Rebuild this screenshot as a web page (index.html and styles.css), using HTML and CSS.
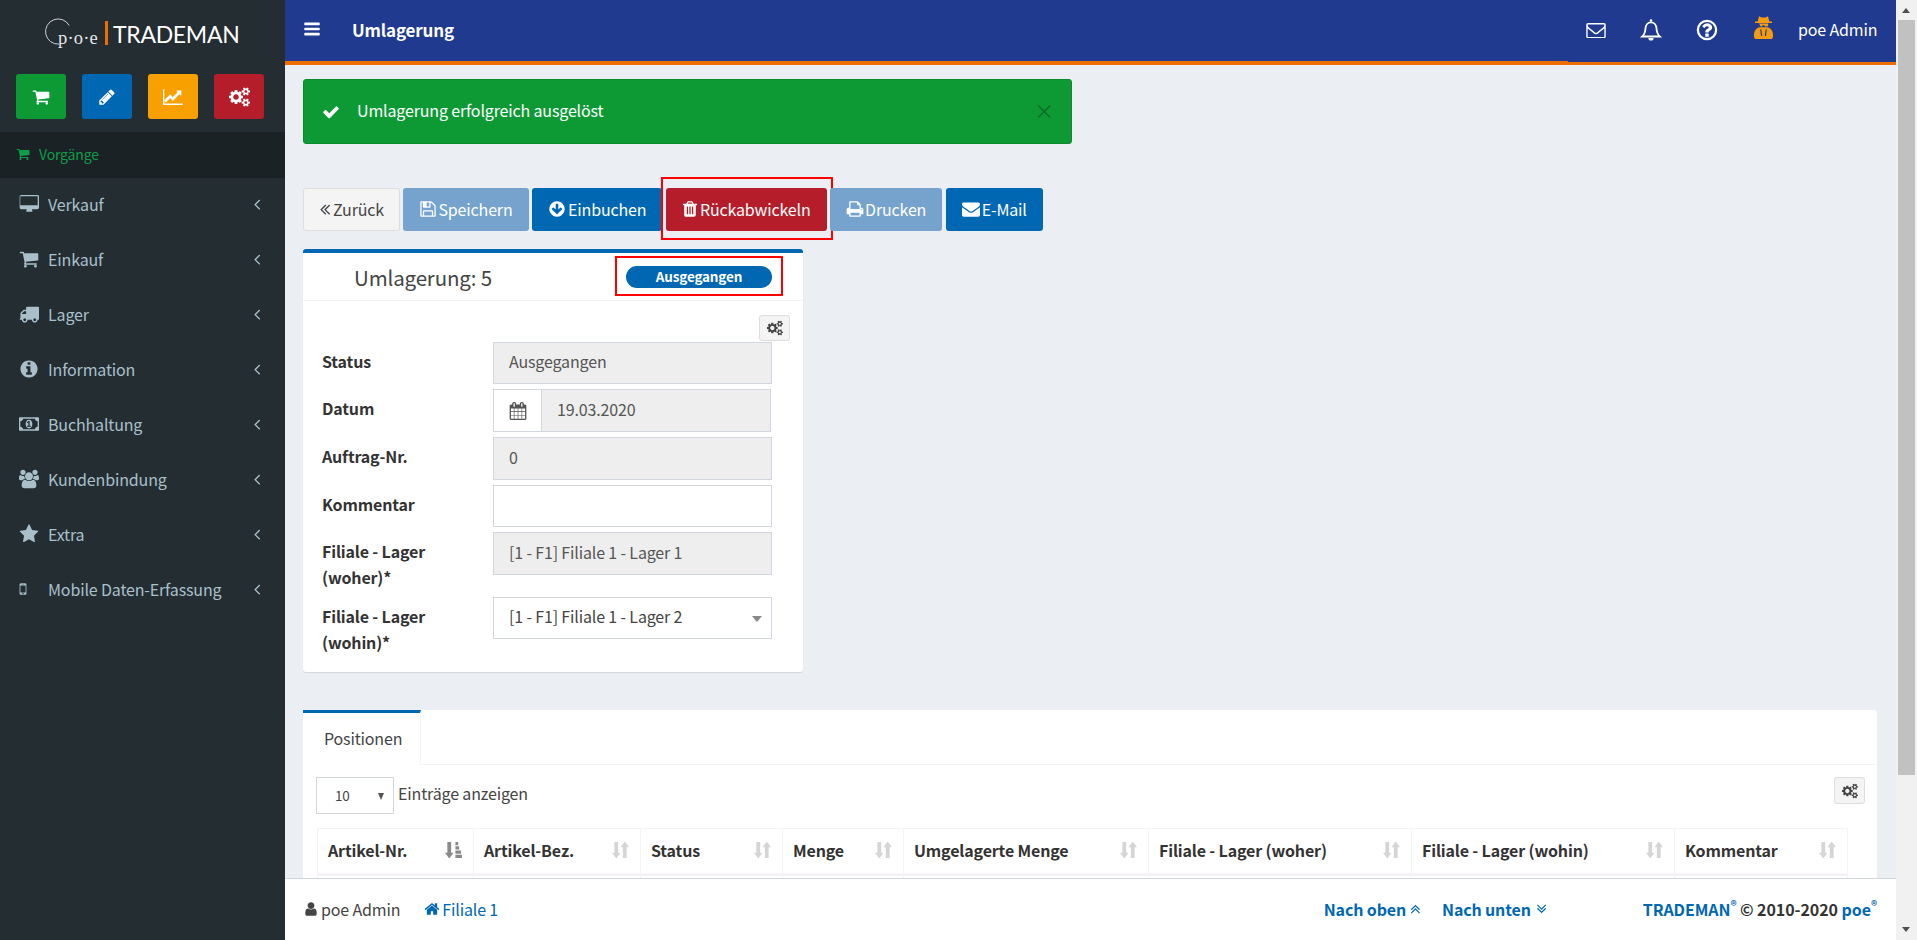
FILE: index.html
```html
<!DOCTYPE html>
<html lang="de">
<head>
<meta charset="utf-8">
<title>Umlagerung</title>
<link rel="stylesheet" href="styles.css">
</head>
<body>
<svg class="sprite" xmlns="http://www.w3.org/2000/svg">
<symbol id="i-cart" viewBox="0 0 1792 1792"><path d="M704 1536q0 52-38 90t-90 38-90-38-38-90 38-90 90-38 90 38 38 90zm896 0q0 52-38 90t-90 38-90-38-38-90 38-90 90-38 90 38 38 90zm128-1088v512q0 24-16.500 42.500t-40.500 21.500l-1044 122q13 60 13 70 0 16-24 64h920q26 0 45 19t19 45-19 45-45 19h-1024q-26 0-45-19t-19-45q0-11 8-31.500t16-36 21.500-40 15.500-29.500l-177-823h-204q-26 0-45-19t-19-45 19-45 45-19h256q16 0 28.500 6.500t19.500 15.500 13 24.500 8 26 5.500 29.500 4.500 26h1201q26 0 45 19t19 45z"/></symbol>
<symbol id="i-pencil" viewBox="0 0 1792 1792"><path d="M491 1536l91-91-235-235-91 91v107h128v128h107zm523-928q0-22-22-22-10 0-17 7l-542 542q-7 7-7 17 0 22 22 22 10 0 17-7l542-542q7-7 7-17zm-54-192l416 416-832 832h-416v-416zm683 96q0 53-37 90l-166 166-416-416 166-165q36-38 90-38 53 0 91 38l235 234q37 39 37 91z"/></symbol>
<symbol id="i-chart" viewBox="0 0 2048 1792"><path d="M1920 1536v128h-1920v-1536h128v1408h1792zm-128-1248v435q0 21-19.500 29.500t-35.500-7.500l-121-121-633 633q-10 10-23 10t-23-10l-233-233-416 416-192-192 585-585q10-10 23-10t23 10l233 233 464-464-121-121q-16-16-7.500-35.500t29.500-19.500h435q14 0 23 9t9 23z"/></symbol>
<symbol id="i-cogs" viewBox="0 0 1920 1792"><path d="M896 896q0-106-75-181t-181-75-181 75-75 181 75 181 181 75 181-75 75-181zm768 512q0-52-38-90t-90-38-90 38-38 90q0 53 37.500 90.500t90.500 37.500 90.500-37.500 37.500-90.500zm0-1024q0-52-38-90t-90-38-90 38-38 90q0 53 37.500 90.500t90.500 37.500 90.500-37.500 37.500-90.500zm-384 421v185q0 10-7 19.500t-16 10.500l-155 24q-11 35-32 76 34 48 90 115 7 11 7 20 0 12-7 19-23 30-82.500 89.500t-78.500 59.500q-11 0-21-7l-115-90q-37 19-77 31-11 108-23 155-7 24-30 24h-186q-11 0-20-7.500t-10-17.500l-23-153q-34-10-75-31l-118 89q-7 7-20 7-11 0-21-8-144-133-144-160 0-9 7-19 10-14 41-53t47-61q-23-44-35-82l-152-24q-10-1-17-9.500t-7-19.500v-185q0-10 7-19.500t16-10.500l155-24q11-35 32-76-34-48-90-115-7-11-7-20 0-12 7-20 22-30 82-89t79-59q11 0 21 7l115 90q34-18 77-32 11-108 23-154 7-24 30-24h186q11 0 20 7.500t10 17.500l23 153q34 10 75 31l118-89q8-7 20-7 11 0 21 8 144 133 144 160 0 8-7 19-12 16-42 54t-45 60q23 48 34 82l152 23q10 2 17 10.500t7 19.500zm640 533v140q0 16-149 31-12 27-30 52 51 113 51 138 0 4-4 7-122 71-124 71-8 0-46-47t-52-68q-20 2-30 2t-30-2q-14 21-52 68t-46 47q-2 0-124-71-4-3-4-7 0-25 51-138-18-25-30-52-149-15-149-31v-140q0-16 149-31 13-29 30-52-51-113-51-138 0-4 4-7 4-2 35-20t59-34 30-16q8 0 46 46.500t52 67.500q20-2 30-2t30 2q51-71 92-112l6-2q4 0 124 70 4 3 4 7 0 25-51 138 17 23 30 52 149 15 149 31zm0-1024v140q0 16-149 31-12 27-30 52 51 113 51 138 0 4-4 7-122 71-124 71-8 0-46-47t-52-68q-20 2-30 2t-30-2q-14 21-52 68t-46 47q-2 0-124-71-4-3-4-7 0-25 51-138-18-25-30-52-149-15-149-31v-140q0-16 149-31 13-29 30-52-51-113-51-138 0-4 4-7 4-2 35-20t59-34 30-16q8 0 46 46.500t52 67.500q20-2 30-2t30 2q51-71 92-112l6-2q4 0 124 70 4 3 4 7 0 25-51 138 17 23 30 52 149 15 149 31z"/></symbol>
<symbol id="i-desktop" viewBox="0 0 1984 1792"><path d="M1856 992v-832q0-13-9.500-22.500t-22.500-9.500h-1664q-13 0-22.500 9.500t-9.500 22.500v832q0 13 9.500 22.500t22.500 9.500h1664q13 0 22.500-9.500t9.500-22.500zm128-832v1088q0 66-47 113t-113 47h-544q0 37 16 77.500t32 71 16 43.500q0 26-19 45t-45 19h-512q-26 0-45-19t-19-45q0-14 16-44t32-70 16-78h-544q-66 0-113-47t-47-113v-1088q0-66 47-113t113-47h1632q66 0 113 47t47 113z"/></symbol>
<symbol id="i-truck" viewBox="0 0 1792 1792"><path d="M640 1408q0-52-38-90t-90-38-90 38-38 90 38 90 90 38 90-38 38-90zm-384-512h384v-256h-158q-13 0-22 9l-195 195q-9 9-9 22v30zm1280 512q0-52-38-90t-90-38-90 38-38 90 38 90 90 38 90-38 38-90zm256-1088v1024q0 15-4 26.500t-13.500 18.500-16.500 11.500-23.500 6-22.500 2-25.500 0-22.500-.5q0 106-75 181t-181 75-181-75-75-181h-384q0 106-75 181t-181 75-181-75-75-181h-64q-3 0-22.500.5t-25.500 0-22.500-2-23.500-6-16.500-11.500-13.500-18.500-4-26.500q0-26 19-45t45-19v-320q0-8-.5-35t0-38 2.500-34.500 6.500-37 14-30.500 22.500-30l198-198q19-19 50.500-32t58.500-13h160v-192q0-26 19-45t45-19h1024q26 0 45 19t19 45z"/></symbol>
<symbol id="i-info" viewBox="0 0 1792 1792"><path d="M1152 1376v-160q0-14-9-23t-23-9h-96v-512q0-14-9-23t-23-9h-320q-14 0-23 9t-9 23v160q0 14 9 23t23 9h96v320h-96q-14 0-23 9t-9 23v160q0 14 9 23t23 9h448q14 0 23-9t9-23zm-128-896v-160q0-14-9-23t-23-9h-192q-14 0-23 9t-9 23v160q0 14 9 23t23 9h192q14 0 23-9t9-23zm640 416q0 209-103 385.500t-279.500 279.500-385.500 103-385.500-103-279.500-279.500-103-385.500 103-385.500 279.500-279.500 385.500-103 385.500 103 279.500 279.500 103 385.500z"/></symbol>
<symbol id="i-money" viewBox="0 0 1920 1792"><path d="M768 1152h384v-96h-128v-448h-114l-148 137 77 80q42-37 55-57h2v288h-128v96zm512-256q0 70-21 142t-59.500 134-101.500 101-138 39-138-39-101.500-101-59.500-134-21-142 21-142 59.500-134 101.500-101 138-39 138 39 101.500 101 59.500 134 21 142zm512 256v-512q-106 0-181-75t-75-181h-1152q0 106-75 181t-181 75v512q106 0 181 75t75 181h1152q0-106 75-181t181-75zm128-832v1152q0 26-19 45t-45 19h-1792q-26 0-45-19t-19-45v-1152q0-26 19-45t45-19h1792q26 0 45 19t19 45z"/></symbol>
<symbol id="i-users" viewBox="0 0 1920 1792"><path d="M593 896q-162 5-265 128h-134q-82 0-138-40.500t-56-118.500q0-353 124-353 6 0 43.500 21t97.500 42.500 119 21.500q67 0 133-23-5 37-5 66 0 139 81 256zm1071 637q0 120-73 189.500t-194 69.500h-874q-121 0-194-69.500t-73-189.500q0-53 3.500-103.500t14-109 26.500-108.500 43-97.500 62-81 85.500-53.500 111.500-20q10 0 43 21.500t73 48 107 48 135 21.500 135-21.500 107-48 73-48 43-21.500q61 0 111.500 20t85.500 53.500 62 81 43 97.500 26.500 108.500 14 109 3.500 103.500zm-1024-1277q0 106-75 181t-181 75-181-75-75-181 75-181 181-75 181 75 75 181zm704 384q0 159-112.500 271.500t-271.500 112.500-271.500-112.500-112.500-271.500 112.500-271.500 271.500-112.500 271.500 112.500 112.500 271.500zm576 225q0 78-56 118.500t-138 40.500h-134q-103-123-265-128 81-117 81-256 0-29-5-66 66 23 133 23 59 0 119-21.500t97.500-42.500 43.500-21q124 0 124 353zm-128-609q0 106-75 181t-181 75-181-75-75-181 75-181 181-75 181 75 75 181z"/></symbol>
<symbol id="i-star" viewBox="0 0 1792 1792"><path d="M1728 647q0 22-26 48l-363 354 86 500q1 7 1 20 0 21-10.500 35.500t-30.500 14.500q-19 0-40-12l-449-236-449 236q-22 12-40 12-21 0-31.500-14.500t-10.500-35.500q0-6 2-20l86-500-364-354q-25-27-25-48 0-37 56-46l502-73 225-455q19-41 49-41t49 41l225 455 502 73q56 9 56 46z"/></symbol>
<symbol id="i-mobile" viewBox="0 0 1792 1792"><path d="M976 1408q0-33-23.500-56.500t-56.500-23.500-56.500 23.500-23.500 56.500 23.500 56.500 56.500 23.500 56.500-23.500 23.500-56.500zm208-160v-704q0-13-9.500-22.500t-22.500-9.500h-512q-13 0-22.500 9.500t-9.500 22.500v704q0 13 9.500 22.500t22.500 9.500h512q13 0 22.500-9.500t9.500-22.500zm-192-848q0-16-16-16h-160q-16 0-16 16t16 16h160q16 0 16-16zm288-16v1024q0 52-38 90t-90 38h-512q-52 0-90-38t-38-90v-1024q0-52 38-90t90-38h512q52 0 90 38t38 90z"/></symbol>
<symbol id="i-angle" viewBox="0 0 1792 1792"><path d="M1203 544q0 13-10 23l-393 393 393 393q10 10 10 23t-10 23l-50 50q-10 10-23 10t-23-10l-466-466q-10-10-10-23t10-23l466-466q10-10 23-10t23 10l50 50q10 10 10 23z"/></symbol>
<symbol id="i-dbl" viewBox="0 0 1792 1792"><path d="M1011 1376q0 13-10 23l-50 50q-10 10-23 10t-23-10l-466-466q-10-10-10-23t10-23l466-466q10-10 23-10t23 10l50 50q10 10 10 23t-10 23l-393 393 393 393q10 10 10 23zm384 0q0 13-10 23l-50 50q-10 10-23 10t-23-10l-466-466q-10-10-10-23t10-23l466-466q10-10 23-10t23 10l50 50q10 10 10 23t-10 23l-393 393 393 393q10 10 10 23z"/></symbol>
<symbol id="i-bars" viewBox="0 0 1792 1792"><path d="M1664 1344v128q0 26-19 45t-45 19h-1408q-26 0-45-19t-19-45v-128q0-26 19-45t45-19h1408q26 0 45 19t19 45zm0-512v128q0 26-19 45t-45 19h-1408q-26 0-45-19t-19-45v-128q0-26 19-45t45-19h1408q26 0 45 19t19 45zm0-512v128q0 26-19 45t-45 19h-1408q-26 0-45-19t-19-45v-128q0-26 19-45t45-19h1408q26 0 45 19t19 45z"/></symbol>
<symbol id="i-env-o" viewBox="0 160 1792 1472"><path d="M1664 1504v-768q-32 36-69 66-268 206-426 338-51 43-83 67t-86.500 48.500-102.500 24.500h-2q-48 0-102.500-24.500t-86.500-48.500-83-67q-158-132-426-338-37-30-69-66v768q0 13 9.500 22.500t22.500 9.500h1472q13 0 22.500-9.500t9.500-22.500zm0-1051v-24.500l-.5-13-3-12.500-5.500-9-9-7.500-14-2.500h-1472q-13 0-22.500 9.500t-9.500 22.500q0 168 147 284 193 152 401 317 6 5 35 29.500t46 37.500 44.500 31.500 50.500 27.500 43 9h2q20 0 43-9t50.500-27.500 44.500-31.500 46-37.500 35-29.500q208-165 401-317 54-43 100.500-115.500t46.500-131.500zm128-37v1088q0 66-47 113t-113 47h-1472q-66 0-113-47t-47-113v-1088q0-66 47-113t113-47h1472q66 0 113 47t47 113z"/></symbol>
<symbol id="i-bell-o" viewBox="0 0 24 24"><path class="bell-line" d="M3.200 18.500c2.100-1.900 3.100-4.300 3.300-8.200.2-3.500 2.400-6 5.500-6s5.300 2.500 5.500 6c.2 3.900 1.200 6.300 3.300 8.200z"/><circle cx="12" cy="2.600" r="1.300"/><path d="M9.400 20h5.200a2.600 2.600 0 0 1-5.200 0z"/></symbol>
<symbol id="i-help" viewBox="0 0 1792 1792"><path d="M1024 1376v-192q0-14-9-23t-23-9h-192q-14 0-23 9t-9 23v192q0 14 9 23t23 9h192q14 0 23-9t9-23zm256-672q0-88-55.500-163t-138.500-116-170-41q-243 0-371 213-15 24 8 42l132 100q7 6 19 6 16 0 25-12 53-68 86-92 34-24 86-24 48 0 85.500 26t37.500 59q0 38-20 61t-68 45q-63 28-115.500 86.500t-52.500 125.500v36q0 14 9 23t23 9h192q14 0 23-9t9-23q0-19 21.500-49.500t54.500-49.500q32-18 49-28.500t46-35 44.500-48 28-60.500 12.500-81z"/><circle class="bell-line thick" cx="896" cy="896" r="680"/></symbol>
<symbol id="i-secret" viewBox="0 0 19 23"><path d="M5 .3 7.600 1.400h3.800L14 .3l1.300 5.200H18v1.400H1V5.500h2.700z"/><path d="M4.800 7.600h9.400v1.200c0 1.100-.4 1.700-1.200 1.700h-1.500c-.7 0-1.100-.5-1.300-1.200h-1.400c-.2.700-.6 1.200-1.300 1.200H7c-.8 0-1.200-.6-1.200-1.700z"/><path fill-rule="evenodd" d="M6 11.200h7c3.500.6 6 3.500 6 7.800v1.400c0 1.600-1 2.600-2.600 2.600H2.600C1 23 0 22 0 20.400V19c0-4.300 2.500-7.200 6-7.800zm1.300 2 .9 6.800H7L6.200 13.500zm4.400 0 1.100.3-.8 6.500h-1.200z"/></symbol>
<symbol id="i-check" viewBox="0 0 1792 1792"><path d="M1671 566q0 40-28 68l-724 724-136 136q-28 28-68 28t-68-28l-136-136-362-362q-28-28-28-68t28-68l136-136q28-28 68-28t68 28l294 295 656-657q28-28 68-28t68 28l136 136q28 28 28 68z"/></symbol>
<symbol id="i-save" viewBox="0 0 1792 1792"><path d="M512 1536h768v-384h-768v384zm896 0h128v-896q0-14-10-38.500t-20-34.500l-281-281q-10-10-34-20t-39-10v416q0 40-28 68t-68 28h-576q-40 0-68-28t-28-68v-416h-128v1280h128v-416q0-40 28-68t68-28h832q40 0 68 28t28 68v416zm-384-928v-320q0-13-9.500-22.500t-22.500-9.500h-192q-13 0-22.500 9.500t-9.500 22.500v320q0 13 9.500 22.500t22.500 9.500h192q13 0 22.500-9.500t9.500-22.500zm640 32v928q0 40-28 68t-68 28h-1344q-40 0-68-28t-28-68v-1344q0-40 28-68t68-28h928q40 0 88 20t76 48l280 280q28 28 48 76t20 88z"/></symbol>
<symbol id="i-down" viewBox="0 0 1792 1792"><path d="M1412 897q0-27-18-45l-91-91q-18-18-45-18t-45 18l-189 189v-502q0-26-19-45t-45-19h-128q-26 0-45 19t-19 45v502l-189-189q-19-19-45-19t-45 19l-91 91q-18 18-18 45t18 45l362 362 91 91q18 18 45 18t45-18l91-91 362-362q18-18 18-45zm252-1q0 209-103 385.500t-279.500 279.500-385.500 103-385.500-103-279.500-279.500-103-385.500 103-385.500 279.500-279.500 385.500-103 385.500 103 279.500 279.500 103 385.500z"/></symbol>
<symbol id="i-trash" viewBox="0 0 1792 1792"><path d="M704 1376v-704q0-14-9-23t-23-9h-64q-14 0-23 9t-9 23v704q0 14 9 23t23 9h64q14 0 23-9t9-23zm256 0v-704q0-14-9-23t-23-9h-64q-14 0-23 9t-9 23v704q0 14 9 23t23 9h64q14 0 23-9t9-23zm256 0v-704q0-14-9-23t-23-9h-64q-14 0-23 9t-9 23v704q0 14 9 23t23 9h64q14 0 23-9t9-23zm-544-992h448l-48-117q-7-9-17-11h-317q-10 2-17 11zm928 32v64q0 14-9 23t-23 9h-96v948q0 83-47 143.500t-113 60.500h-832q-66 0-113-58.500t-47-141.500v-952h-96q-14 0-23-9t-9-23v-64q0-14 9-23t23-9h309l70-167q15-37 54-63t79-26h320q40 0 79 26t54 63l70 167h309q14 0 23 9t9 23z"/></symbol>
<symbol id="i-print" viewBox="0 0 1792 1792"><path d="M448 1536h896v-256h-896v256zm0-640h896v-384h-160q-40 0-68-28t-28-68v-160h-640v640zm1152 64q0-26-19-45t-45-19-45 19-19 45 19 45 45 19 45-19 19-45zm128 0v416q0 13-9.500 22.500t-22.500 9.500h-224v160q0 40-28 68t-68 28h-960q-40 0-68-28t-28-68v-160h-224q-13 0-22.500-9.500t-9.500-22.500v-416q0-79 56.500-135.500t135.500-56.500h64v-544q0-40 28-68t68-28h672q40 0 88 20t76 48l152 152q28 28 48 76t20 88v256h64q79 0 135.500 56.500t56.500 135.500z"/></symbol>
<symbol id="i-env" viewBox="0 0 1792 1792"><path d="M1792 710v794q0 66-47 113t-113 47h-1472q-66 0-113-47t-47-113v-794q44 49 101 87 362 246 497 345 57 42 92.500 65.500t94.500 48 110 24.500h2q51 0 110-24.500t94.500-48 92.500-65.500q170-123 498-345 57-39 100-87zm0-294q0 79-49 151t-122 123q-376 261-468 325-10 7-42.500 30.500t-54 38-52 32.500-57.500 27-50 9h-2q-23 0-50-9t-57.500-27-52-32.500-54-38-42.500-30.500q-91-64-262-182.500t-205-142.500q-62-42-117-115.500t-55-136.500q0-78 41.500-130t118.500-52h1472q65 0 112.500 47t47.500 113z"/></symbol>
<symbol id="i-cal" viewBox="0 0 1664 1792"><path d="M128 1664h288v-288h-288v288zm352 0h320v-288h-320v288zm-352-352h288v-320h-288v320zm352 0h320v-320h-320v320zm-352-384h288v-288h-288v288zm736 736h320v-288h-320v288zm-384-736h320v-288h-320v288zm768 736h288v-288h-288v288zm-384-352h320v-320h-320v320zm-352-864v-288q0-13-9.500-22.500t-22.500-9.500h-64q-13 0-22.500 9.500t-9.500 22.500v288q0 13 9.500 22.500t22.500 9.500h64q13 0 22.500-9.500t9.500-22.500zm736 864h288v-320h-288v320zm-384-384h320v-288h-320v288zm384 0h288v-288h-288v288zm32-480v-288q0-13-9.500-22.500t-22.500-9.500h-64q-13 0-22.500 9.500t-9.500 22.500v288q0 13 9.500 22.500t22.500 9.500h64q13 0 22.500-9.500t9.500-22.500zm384-64v1280q0 52-38 90t-90 38h-1408q-52 0-90-38t-38-90v-1280q0-52 38-90t90-38h128v-96q0-66 47-113t113-47h64q66 0 113 47t47 113v96h384v-96q0-66 47-113t113-47h64q66 0 113 47t47 113v96h128q52 0 90 38t38 90z"/></symbol>
<symbol id="i-user" viewBox="0 0 1792 1792"><path d="M1536 1399q0 109-62.500 187t-150.500 78h-854q-88 0-150.500-78t-62.500-187q0-85 8.500-160.500t31.500-152 58.500-131 94-89 134.500-34.500q131 128 313 128t313-128q76 0 134.500 34.500t94 89 58.500 131 31.500 152 8.500 160.500zm-256-887q0 159-112.500 271.500t-271.500 112.500-271.500-112.500-112.500-271.500 112.500-271.500 271.500-112.500 271.500 112.500 112.500 271.500z"/></symbol>
<symbol id="i-home" viewBox="0 0 1792 1792"><path d="M1472 992v480q0 26-19 45t-45 19h-384v-384h-256v384h-384q-26 0-45-19t-19-45v-480q0-1 .5-3t.5-3l575-474 575 474q1 2 1 6zm223-69l-62 74q-8 9-21 11h-3q-13 0-21-7l-692-577-692 577q-12 8-24 7-13-2-21-11l-62-74q-8-10-7-23.500t11-21.500l719-599q32-26 76-26t76 26l244 204v-195q0-14 9-23t23-9h192q14 0 23 9t9 23v408l219 182q10 8 11 21.500t-7 23.500z"/></symbol>
<symbol id="i-sort" viewBox="0 0 18 19"><path d="M2.500 1h4v11.500H9L4.500 18.500 0 12.500h2.500z"/><path d="M11.500 18h4V6.500H18L13.500.5 9 6.500h2.500z"/></symbol>
<symbol id="i-sort-asc" viewBox="0 0 18 19"><path d="M2.500 1h4v11.500H9L4.500 18.500 0 12.500h2.500z"/><path d="M11 1h3v3.500h-3zM11 5.500h4V9h-4zM11 10h6v3.500h-6zM11 14.500h7V18h-7z"/></symbol>
</svg>

<div class="app">
  <aside class="sidebar">
    <div class="logo">
      <svg class="logo-arc" viewBox="0 0 30 30"><path d="M27 8A13.500 13.500 0 1 0 16 28"/></svg>
      <span class="logo-poe">p·o·e</span>
      <span class="logo-bar"></span>
      <span class="logo-name">TRADEMAN</span>
    </div>
    <div class="quick">
      <a class="quick-btn green"><svg class="ico q"><use href="#i-cart"/></svg></a>
      <a class="quick-btn blue"><svg class="ico q"><use href="#i-pencil"/></svg></a>
      <a class="quick-btn orange"><svg class="ico q wide"><use href="#i-chart"/></svg></a>
      <a class="quick-btn red"><svg class="ico q wide"><use href="#i-cogs"/></svg></a>
    </div>
    <div class="section"><svg class="ico"><use href="#i-cart"/></svg><span>Vorgänge</span></div>
    <nav class="menu">
      <a class="menu-item"><span class="menu-ico"><svg class="ico"><use href="#i-desktop"/></svg></span><span class="menu-label">Verkauf</span><svg class="ico chev"><use href="#i-angle"/></svg></a>
      <a class="menu-item"><span class="menu-ico"><svg class="ico"><use href="#i-cart"/></svg></span><span class="menu-label">Einkauf</span><svg class="ico chev"><use href="#i-angle"/></svg></a>
      <a class="menu-item"><span class="menu-ico"><svg class="ico"><use href="#i-truck"/></svg></span><span class="menu-label">Lager</span><svg class="ico chev"><use href="#i-angle"/></svg></a>
      <a class="menu-item"><span class="menu-ico"><svg class="ico"><use href="#i-info"/></svg></span><span class="menu-label">Information</span><svg class="ico chev"><use href="#i-angle"/></svg></a>
      <a class="menu-item"><span class="menu-ico"><svg class="ico"><use href="#i-money"/></svg></span><span class="menu-label">Buchhaltung</span><svg class="ico chev"><use href="#i-angle"/></svg></a>
      <a class="menu-item"><span class="menu-ico"><svg class="ico"><use href="#i-users"/></svg></span><span class="menu-label">Kundenbindung</span><svg class="ico chev"><use href="#i-angle"/></svg></a>
      <a class="menu-item"><span class="menu-ico"><svg class="ico"><use href="#i-star"/></svg></span><span class="menu-label">Extra</span><svg class="ico chev"><use href="#i-angle"/></svg></a>
      <a class="menu-item"><span class="menu-ico"><svg class="ico mob"><use href="#i-mobile"/></svg></span><span class="menu-label">Mobile Daten-Erfassung</span><svg class="ico chev"><use href="#i-angle"/></svg></a>
    </nav>
  </aside>

  <div class="main">
    <header class="topbar">
      <div class="top-left">
        <svg class="ico burger"><use href="#i-bars"/></svg>
        <span class="page-title">Umlagerung</span>
      </div>
      <div class="top-right">
        <svg class="ico top-env"><use href="#i-env-o"/></svg>
        <svg class="ico top-bell"><use href="#i-bell-o"/></svg>
        <svg class="ico top-help"><use href="#i-help"/></svg>
        <svg class="ico secret"><use href="#i-secret"/></svg>
        <span class="top-user">poe Admin</span>
      </div>
    </header>

    <main class="content">
      <div class="alert">
        <svg class="ico alert-ico"><use href="#i-check"/></svg>
        <span class="alert-text">Umlagerung erfolgreich ausgelöst</span>
        <span class="alert-close">×</span>
      </div>

      <div class="toolbar">
        <a class="btn btn-default"><svg class="ico dbl"><use href="#i-dbl"/></svg>Zurück</a>
        <a class="btn btn-muted"><svg class="ico"><use href="#i-save"/></svg>Speichern</a>
        <a class="btn btn-blue"><svg class="ico"><use href="#i-down"/></svg>Einbuchen</a>
        <a class="btn btn-red"><svg class="ico"><use href="#i-trash"/></svg>Rückabwickeln<span class="mark mark-btn"></span></a>
        <a class="btn btn-muted"><svg class="ico"><use href="#i-print"/></svg>Drucken</a>
        <a class="btn btn-blue"><svg class="ico"><use href="#i-env"/></svg>E-Mail</a>
      </div>

      <section class="card">
        <div class="card-head">
          <h2 class="card-title">Umlagerung: 5</h2>
          <span class="badge">Ausgegangen<span class="mark mark-badge"></span></span>
        </div>
        <div class="card-tools"><a class="gear"><svg class="ico"><use href="#i-cogs"/></svg></a></div>
        <div class="form">
          <label class="lbl">Status</label>
          <div class="field disabled h42">Ausgegangen</div>
          <label class="lbl">Datum</label>
          <div class="date"><span class="date-addon"><svg class="ico"><use href="#i-cal"/></svg></span><span class="date-val">19.03.2020</span></div>
          <label class="lbl">Auftrag-Nr.</label>
          <div class="field disabled">0</div>
          <label class="lbl">Kommentar</label>
          <div class="field h42"></div>
          <label class="lbl">Filiale - Lager (woher)*</label>
          <div class="field disabled">[1 - F1] Filiale 1 - Lager 1</div>
          <label class="lbl">Filiale - Lager (wohin)*</label>
          <div class="field select h42">[1 - F1] Filiale 1 - Lager 2<span class="caret"></span></div>
        </div>
      </section>

      <section class="tabs">
        <div class="tab-list"><span class="tab">Positionen</span></div>
        <div class="tab-body">
          <div class="dt-top">
            <div class="dt-len"><span class="dt-select">10<span class="caret dark"></span></span><span class="dt-label">Einträge anzeigen</span></div>
            <a class="gear gear-dt"><svg class="ico"><use href="#i-cogs"/></svg></a>
          </div>
          <table class="grid">
            <colgroup><col class="c1"><col class="c2"><col class="c3"><col class="c4"><col class="c5"><col class="c6"><col class="c7"><col class="c8"></colgroup>
            <thead>
              <tr>
                <th><span class="th-in">Artikel-Nr.<svg class="ico sort active"><use href="#i-sort-asc"/></svg></span></th>
                <th><span class="th-in">Artikel-Bez.<svg class="ico sort"><use href="#i-sort"/></svg></span></th>
                <th><span class="th-in">Status<svg class="ico sort"><use href="#i-sort"/></svg></span></th>
                <th><span class="th-in">Menge<svg class="ico sort"><use href="#i-sort"/></svg></span></th>
                <th><span class="th-in">Umgelagerte Menge<svg class="ico sort"><use href="#i-sort"/></svg></span></th>
                <th><span class="th-in">Filiale - Lager (woher)<svg class="ico sort"><use href="#i-sort"/></svg></span></th>
                <th><span class="th-in">Filiale - Lager (wohin)<svg class="ico sort"><use href="#i-sort"/></svg></span></th>
                <th><span class="th-in">Kommentar<svg class="ico sort"><use href="#i-sort"/></svg></span></th>
              </tr>
            </thead>
            <tbody><tr><td></td><td></td><td></td><td></td><td></td><td></td><td></td><td></td></tr></tbody>
          </table>
        </div>
      </section>
    </main>

    <footer class="footer">
      <span class="foot-user"><svg class="ico"><use href="#i-user"/></svg>poe Admin</span>
      <a class="foot-link"><svg class="ico"><use href="#i-home"/></svg>Filiale 1</a>
      <a class="foot-nav first">Nach oben<svg class="ico up"><use href="#i-dbl"/></svg></a>
      <a class="foot-nav">Nach unten<svg class="ico dn"><use href="#i-dbl"/></svg></a>
      <span class="foot-copy"><a>TRADEMAN<sup>®</sup></a> © 2010-2020 <a>poe<sup>®</sup></a></span>
    </footer>
  </div>

  <div class="scrollbar">
    <span class="sb-arrow sb-up"></span>
    <span class="sb-thumb"></span>
    <span class="sb-arrow sb-dn"></span>
  </div>
</div>
</body>
</html>
```
FILE: styles.css
```css
* { box-sizing: border-box; }
html, body { margin: 0; height: 100%; overflow: hidden; }
body { font-family: "Noto Sans CJK SC", "Noto Sans", sans-serif; font-size: 16px; line-height: 24px; letter-spacing: -.15px; color: #333; background: #ebeef3; }
.sprite { display: none; }
.ico { width: 1em; height: 1em; fill: currentColor; flex: none; }
a { color: inherit; text-decoration: none; }

.app { display: grid; grid-template-columns: 285px 1fr 21px; height: 940px; }

/* sidebar */
.sidebar { background: #232d32; color: #a9c0cb; display: flex; flex-direction: column; }
.logo { height: 74px; display: flex; align-items: flex-start; padding: 21px 0 0 44px; position: relative; color: #fff; }
.logo-arc { width: 28px; height: 28px; fill: none; stroke: #d8dcde; stroke-width: 1; position: absolute; left: 44px; top: 18px; }
.logo-poe { font-family: "Liberation Serif", serif; font-size: 18.500px; line-height: 24px; margin: 5px 0 0 14px; color: #e8e8e8; letter-spacing: .2px; width: 47px; flex: none; }
.logo-bar { width: 3px; height: 24px; background: #ee6c00; margin: 0 5px 0 0; flex: none; }
.logo-name { font-family: "Lato", sans-serif; font-size: 23px; line-height: 26px; letter-spacing: -.3px; }
.quick { display: flex; gap: 16px; padding-left: 16px; height: 58px; }
.quick-btn { width: 50px; height: 45px; border-radius: 3px; color: #fff; display: flex; align-items: center; justify-content: center; font-size: 18px; }
.q.wide { width: 21px; height: 20px; }
.green { background: #0d9a35; }
.blue { background: #0067b3; }
.orange { background: #f7a000; }
.red { background: #b51d2a; }
.section { height: 46px; background: #1b2225; color: #0f9d4a; display: flex; align-items: center; padding: 0 0 2px 16px; font-size: 14px; gap: 9px; }
.section .ico { font-size: 14px; }
.menu { display: flex; flex-direction: column; }
.menu-item { height: 55px; display: flex; align-items: center; padding: 0 0 4px 19px; }
.menu-ico { width: 29px; display: flex; font-size: 20px; }
.menu-ico .ico { width: 20px; height: 20px; }
.menu-ico .mob { width: 16px; margin-left: -4px; }
.menu-label { flex: 1; font-size: 16px; }
.chev { font-size: 18px; margin-right: 19px; }

/* main column */
.main { display: flex; flex-direction: column; min-width: 0; height: 940px; }
.topbar { height: 65px; flex: none; display: flex; background: #1f3a8f; color: #fff; }
.top-left { width: 1283px; flex: none; display: flex; align-items: center; padding: 0 0 4px 18px; border-bottom: 4px solid #ee6c00; }
.burger { font-size: 18px; }
.page-title { font-weight: 700; font-size: 17px; margin-left: 31px; padding-top: 2px; }
.top-right { flex: 1; display: flex; align-items: center; border-bottom: 3px solid #ee6c00; padding-bottom: 3px; }
.top-env { width: 20px; height: 16px; margin-left: 18px; }
.top-bell { font-size: 24px; margin-left: 33px; }
.top-help { font-size: 24px; margin-left: 32px; }
.bell-line { fill: none; stroke: #fff; stroke-width: 1.800; }
.bell-line.thick { stroke-width: 170; }
.secret { width: 19px; height: 23px; color: #f39c12; margin: -5px 0 0 35px; }
.top-user { margin-left: 25px; font-size: 16px; padding-bottom: 1px; }

.content { flex: 1; min-height: 0; overflow: hidden; padding: 14px 19px 0 18px; }

/* alert */
.alert { width: 769px; height: 65px; background: #0d9a35; border: 1px solid #0c8a2e; border-radius: 3px; color: #fff; display: flex; align-items: center; padding: 0 17px 0 18px; }
.alert-ico { font-size: 18px; }
.alert-text { margin-left: 17px; flex: 1; font-size: 16px; padding-bottom: 4px; }
.alert-close { color: #0a6b2a; font-size: 20px; padding-bottom: 2px; }

/* toolbar */
.toolbar { display: flex; margin-top: 44px; height: 43px; gap: 3.500px; }
.btn { position: relative; display: flex; align-items: center; gap: 1px; height: 43px; padding: 0 15px 2px; border-radius: 3px; color: #fff; font-size: 16px; border: 1px solid transparent; }
.btn .ico { font-size: 18px; }
.btn-default { background: #f4f4f4; border-color: #ddd; color: #444; }
.btn .dbl { margin: 0 -2px 0 -3px; }
.btn-muted { background: #75a3cd; }
.btn-blue { background: #0067b3; gap: 2px; }
.btn-red { background: #b51d2a; }
.btn-red .ico { margin-left: -1px; }
.mark { position: absolute; border: 2px solid #f00; pointer-events: none; }
.mark-btn { left: -6px; right: -7px; top: -12px; bottom: -10px; }
.mark-badge { left: -11px; right: -11px; top: -10px; bottom: -8px; }

/* card */
.card { width: 500px; margin-top: 18px; background: #fff; border-top: 4px solid #0067b3; border-radius: 3px; box-shadow: 0 1px 1px rgba(0,0,0,.1); padding-bottom: 15px; }
.card-head { height: 48px; display: flex; align-items: center; padding: 0 31px 0 51px; border-bottom: 1px solid #f4f4f4; }
.card-title { margin: 0; font-weight: 400; font-size: 20.500px; color: #444; }
.badge { position: relative; margin-left: auto; width: 146px; height: 22px; border-radius: 11px; background: #0067b3; color: #fff; font-weight: 700; font-size: 13.500px; line-height: 21px; text-align: center; }
.card-tools { display: flex; justify-content: flex-end; padding: 14px 13px 0 0; height: 41px; }
.gear { display: flex; align-items: center; justify-content: center; width: 31px; height: 26px; background: #f4f4f4; border: 1px solid #ddd; border-radius: 3px; color: #444; font-size: 16px; }
.form { display: grid; grid-template-columns: 171px 279px; padding-left: 19px; row-gap: 5px; align-items: start; }
.lbl { font-weight: 700; font-size: 16px; line-height: 25.500px; padding: 7px 0 2px; width: 130px; color: #333; }
.field { height: 43px; border: 1px solid #d2d6de; padding: 0 15px 4px; display: flex; align-items: center; color: #555; background: #fff; font-size: 16px; position: relative; }
.h42 { height: 42px; }
.disabled { background: #eee; }
.select { color: #444; }
.caret { position: absolute; right: 9px; top: 18px; border-style: solid; border-width: 6px 5px 0; border-color: #888 transparent transparent; }
.date { display: flex; height: 43px; width: 278px; border: 1px solid #d2d6de; }
.date-addon { width: 48px; background: #fff; border-right: 1px solid #d2d6de; display: flex; align-items: center; justify-content: center; font-size: 18px; color: #555; }
.date-val { flex: 1; background: #eee; display: flex; align-items: center; padding: 0 0 3px 15px; color: #555; }

/* tabs */
.tabs { margin-top: 38px; background: #fff; border-radius: 3px; }
.tab-list { height: 55px; border-bottom: 1px solid #f4f4f4; }
.tab { display: flex; align-items: center; width: 118px; height: 55px; padding: 0 0 3px 21px; border-top: 3px solid #0067b3; border-right: 1px solid #f4f4f4; color: #444; background: #fff; font-size: 16px; }
.tab-body { padding: 12px 30px 0 13px; }
.dt-top { display: flex; justify-content: space-between; height: 51px; }
.dt-len { display: flex; gap: 4px; }
.dt-select { position: relative; width: 78px; height: 37px; border: 1px solid #d2d6de; display: flex; align-items: center; padding: 0 0 2px 18px; font-size: 13.500px; color: #444; }
.dt-label { line-height: 32px; color: #444; }
.caret.dark { border-color: #555 transparent transparent; border-width: 7px 3.500px 0; right: 9px; top: 15px; }
.gear-dt { height: 27px; position: relative; left: 18px; }
.grid { border-collapse: collapse; table-layout: fixed; width: 1530px; margin-left: 1px; }
.c1 { width: 156px; } .c2 { width: 167px; } .c3 { width: 142px; } .c4 { width: 121px; }
.c5 { width: 245px; } .c6 { width: 263px; } .c7 { width: 263px; } .c8 { width: 173px; }
.grid th { height: 46px; border: 1px solid #f4f4f4; border-bottom: 3px solid #f4f4f4; padding: 0 11px 3px 10px; text-align: left; font-size: 16px; color: #333; }
.grid td { height: 40px; border: 1px solid #f4f4f4; }
.th-in { display: flex; align-items: center; justify-content: space-between; }
.sort { width: 17px; height: 18px; color: #d5d5d5; }
.sort.active { color: #8a8a8a; }

/* footer */
.footer { height: 62px; flex: none; background: #fff; border-top: 1px solid #d2d6de; display: flex; align-items: center; padding: 0 19px 2px 18px; color: #444; font-size: 16px; }
.foot-user, .foot-link, .foot-nav { display: flex; align-items: center; gap: 2px; }
.foot-link { color: #0067b3; margin-left: 24px; }
.foot-nav { color: #0067b3; font-weight: 700; margin-left: 18px; }
.foot-nav.first { margin-left: auto; }
.foot-nav .ico { font-size: 16px; }
.up { transform: rotate(90deg); }
.dn { transform: rotate(-90deg); }
.foot-copy { margin-left: 94px; font-weight: 700; color: #333; letter-spacing: -.07px; }
.foot-copy a { color: #0067b3; }
.foot-copy sup { font-size: 12px; line-height: 0; font-weight: 700; }

/* window scrollbar */
.scrollbar { background: #f1f1f1; position: relative; }
.sb-thumb { position: absolute; left: 2px; right: 2px; top: 20px; height: 755px; background: #c1c1c1; }
.sb-arrow { position: absolute; left: 6px; border-style: solid; border-color: transparent; }
.sb-up { top: 8px; border-width: 0 4.500px 5px; border-bottom-color: #505050; }
.sb-dn { bottom: 8px; border-width: 5px 4.500px 0; border-top-color: #505050; }
```
